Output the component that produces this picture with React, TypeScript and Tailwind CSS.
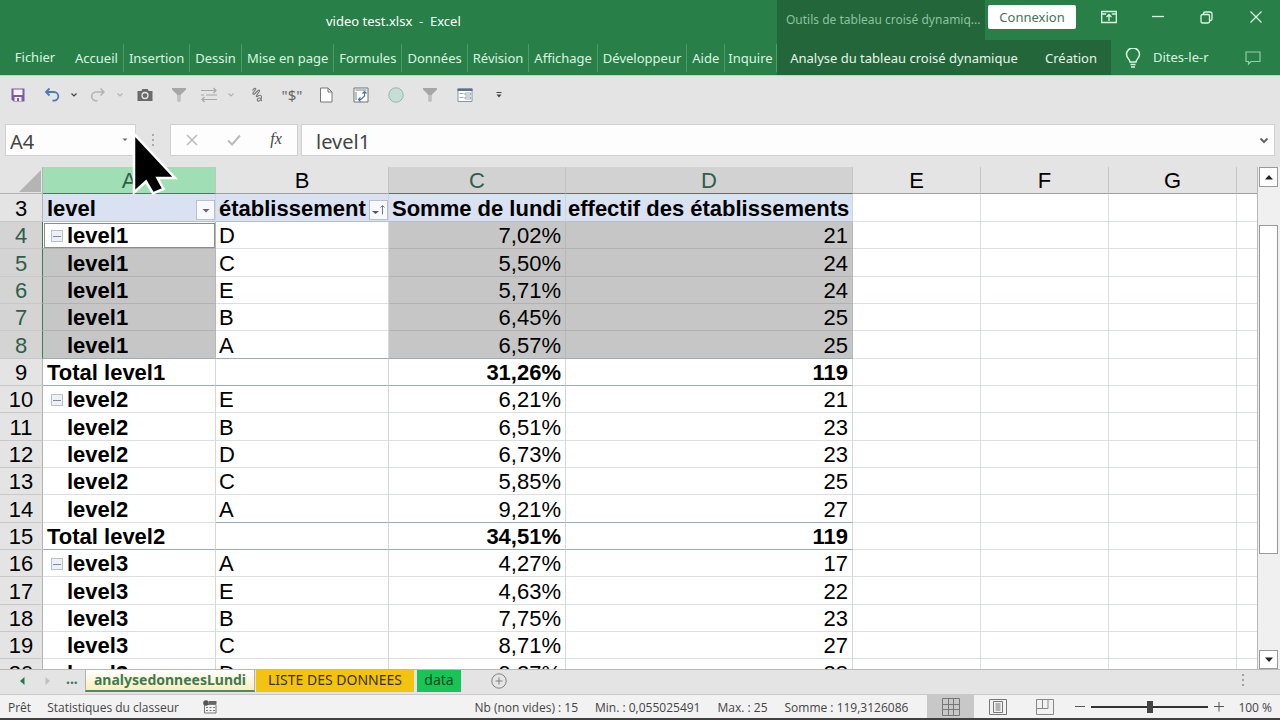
import type { ReactNode } from "react";
import clsx from "clsx";

type PivotRow = {
  n: number;
  level?: string;
  total?: string;
  first?: boolean;
  site?: string;
  sum: string;
  count: string;
};

const rows: PivotRow[] = [
  { n: 4, level: "level1", first: true, site: "D", sum: "7,02%", count: "21" },
  { n: 5, level: "level1", site: "C", sum: "5,50%", count: "24" },
  { n: 6, level: "level1", site: "E", sum: "5,71%", count: "24" },
  { n: 7, level: "level1", site: "B", sum: "6,45%", count: "25" },
  { n: 8, level: "level1", site: "A", sum: "6,57%", count: "25" },
  { n: 9, total: "Total level1", sum: "31,26%", count: "119" },
  { n: 10, level: "level2", first: true, site: "E", sum: "6,21%", count: "21" },
  { n: 11, level: "level2", site: "B", sum: "6,51%", count: "23" },
  { n: 12, level: "level2", site: "D", sum: "6,73%", count: "23" },
  { n: 13, level: "level2", site: "C", sum: "5,85%", count: "25" },
  { n: 14, level: "level2", site: "A", sum: "9,21%", count: "27" },
  { n: 15, total: "Total level2", sum: "34,51%", count: "119" },
  { n: 16, level: "level3", first: true, site: "A", sum: "4,27%", count: "17" },
  { n: 17, level: "level3", site: "E", sum: "4,63%", count: "22" },
  { n: 18, level: "level3", site: "B", sum: "7,75%", count: "23" },
  { n: 19, level: "level3", site: "C", sum: "8,71%", count: "27" },
  { n: 20, level: "level3", site: "D", sum: "9,27%", count: "28" },
];

const tabs = [
  "Accueil",
  "Insertion",
  "Dessin",
  "Mise en page",
  "Formules",
  "Données",
  "Révision",
  "Affichage",
  "Développeur",
  "Aide",
  "Inquire",
];

function FunnelIcon() {
  return (
    <svg className="h-4 w-4" viewBox="0 0 16 16" aria-hidden="true">
      <path d="M1 1h14v1.5L9.5 8v6.5h-3V8L1 2.5z" fill="#a6a6a6" />
      <path d="M8 8v6" stroke="#d8d8d8" />
    </svg>
  );
}

function Chevron({ color }: { color: string }) {
  return (
    <svg className="h-2 w-2" viewBox="0 0 8 8" fill="none" aria-hidden="true">
      <path d="M1.5 2.5L4 5l2.5-2.5" stroke={color} strokeWidth="1.2" />
    </svg>
  );
}

const tools: { label: string; className: string; icon: ReactNode }[] = [
  {
    label: "Enregistrer",
    className: "ml-1.5 w-6",
    icon: (
      <svg className="h-4 w-4" viewBox="0 0 16 16" aria-hidden="true">
        <path d="M1.5 1.5h13v13h-11l-2-2z" fill="#7b5aa6" />
        <path d="M3.5 2.5h9v5.5h-9z" fill="#f4f1f8" />
        <path d="M4.5 10h7v4h-7z" fill="#f4f1f8" />
        <path d="M7 11h2v3H7z" fill="#7b5aa6" />
      </svg>
    ),
  },
  {
    label: "Annuler",
    className: "ml-2.5 w-6",
    icon: (
      <svg className="h-4 w-4" viewBox="0 0 16 16" fill="none" aria-hidden="true">
        <path d="M5.5 1.5L2 5l3.5 3.5M2 5h8a4.3 4.3 0 0 1 0 8.7H8.5" stroke="#4a7ab5" strokeWidth="1.8" />
      </svg>
    ),
  },
  { label: "Liste Annuler", className: "ml-1 w-3", icon: <Chevron color="#444" /> },
  {
    label: "Rétablir",
    className: "ml-1.5 w-6",
    icon: (
      <svg className="h-4 w-4" viewBox="0 0 16 16" fill="none" aria-hidden="true">
        <path d="M10.5 1.5L14 5l-3.5 3.5M14 5H6a4.3 4.3 0 0 0 0 8.7h1.5" stroke="#b4b4b4" strokeWidth="1.6" />
      </svg>
    ),
  },
  { label: "Liste Rétablir", className: "ml-1 w-3", icon: <Chevron color="#b4b4b4" /> },
  {
    label: "Appareil photo",
    className: "ml-[7px] w-6",
    icon: (
      <svg className="h-4 w-4" viewBox="0 0 16 16" aria-hidden="true">
        <path d="M.5 4h3.8l1-2h5.4l1 2h3.8v10H.5z" fill="#6a6a6a" />
        <circle cx="8" cy="8.5" r="3" fill="none" stroke="#e4e4e4" strokeWidth="1.3" />
      </svg>
    ),
  },
  { label: "Filtrer", className: "ml-2.5 w-6", icon: <FunnelIcon /> },
  {
    label: "Permuter",
    className: "ml-1.5 w-6",
    icon: (
      <svg className="h-4 w-[18px]" viewBox="0 0 18 16" fill="none" stroke="#a8a8a8" strokeWidth="1.2" aria-hidden="true">
        <path d="M1 3.5h15M13.5 1L16 3.5 13.5 6M1 8h3M6 8h11M2 12.5h15M4.5 10L2 12.5 4.5 15" />
      </svg>
    ),
  },
  { label: "Liste Permuter", className: "ml-1 w-3", icon: <Chevron color="#b4b4b4" /> },
  {
    label: "Forme libre",
    className: "ml-2 w-6",
    icon: (
      <svg className="h-4 w-4" viewBox="0 0 16 16" fill="none" stroke="#777" strokeWidth="1.1" aria-hidden="true">
        <path d="M3.500 3.500C5 1 7.500.5 6.500 2.500L4 6c-.5 1.500 1 1.500 2 .5l3-3c1.500-1 2 0 1 1.500L7.500 8.500C7 10 8 10 9 9s3.500-1.500 3.500 1-2 4.500-3.500 4-.5-3 1.500-3 1.500 2.500 2.500 3" />
      </svg>
    ),
  },
  {
    label: "Format monétaire",
    className: "ml-[11px] w-6",
    icon: <span className="text-[15px] leading-4 text-[#666]">"$"</span>,
  },
  {
    label: "Nouveau",
    className: "ml-2.5 w-6",
    icon: (
      <svg className="h-4 w-4" viewBox="0 0 16 16" aria-hidden="true">
        <path d="M2.5 1H10l4 4v10H2.5z" fill="#fff" stroke="#777" />
        <path d="M10 1v4h4" fill="none" stroke="#777" />
      </svg>
    ),
  },
  {
    label: "Actualiser",
    className: "ml-[11px] w-6",
    icon: (
      <svg className="h-4 w-4" viewBox="0 0 16 16" fill="none" aria-hidden="true">
        <path d="M1 1h14v14H1z" fill="#fff" stroke="#707070" />
        <path d="M2.500 3h11M3 5v8" stroke="#9ab0c4" strokeWidth="1.5" />
        <path d="M11.5 5v4L8 12.5H5.5M9.5 6.5l2-2 2 2M7.5 10.5l-2 2 2 2" stroke="#3f78ae" strokeWidth="1.2" />
      </svg>
    ),
  },
  {
    label: "Ellipse",
    className: "ml-[11px] w-6",
    icon: (
      <svg className="h-4 w-4" viewBox="0 0 16 16" aria-hidden="true">
        <circle cx="8" cy="8" r="7.2" fill="#c5dfd5" stroke="#92b8a8" />
      </svg>
    ),
  },
  { label: "Effacer le filtre", className: "ml-2.5 w-6", icon: <FunnelIcon /> },
  {
    label: "Formulaire",
    className: "ml-[11px] w-6",
    icon: (
      <svg className="h-4 w-4" viewBox="0 0 16 16" fill="none" aria-hidden="true">
        <path d="M1 2h14v12.5H1z" fill="#fff" stroke="#8496a8" />
        <path d="M.5 1.5h15V4H.5z" fill="#5a7189" />
        <path d="M2.5 6.5h4M2.5 10.500h4M8 6h5.500v2H8zM8 10h5.500v2H8z" stroke="#9aa8b6" />
      </svg>
    ),
  },
  {
    label: "Personnaliser",
    className: "ml-4 w-3",
    icon: (
      <svg className="h-2 w-2" viewBox="0 0 8 8" aria-hidden="true">
        <path d="M1.5 1h5v1h-5zM1.5 3.500h5L4 6.500z" fill="#444" />
      </svg>
    ),
  },
];

function TitleBar() {
  return (
    <div className="flex h-10 text-[#d9f7e1]">
      <div className="flex w-[777px] items-center pt-1 text-[13px]">
        <h1 className="ml-[326px] whitespace-pre text-white">video test.xlsx  -  Excel</h1>
      </div>
      <div className="flex w-52 items-center bg-[#226639] pl-[9px] text-xs whitespace-nowrap text-[#8fc29f]">
        Outils de tableau croisé dynamiq...
      </div>
      <div className="flex flex-1 items-start pl-[3px] pt-[5px]">
        <button type="button" className="h-6 w-[88px] rounded-xs bg-white pt-0.5 text-[13px] text-[#44735a]">
          Connexion
        </button>
        <div className="ml-auto flex h-6 items-center">
          <button type="button" aria-label="Options du ruban" className="grid w-[50px] place-items-center">
            <svg className="h-4 w-4" viewBox="0 0 16 16" fill="none" stroke="currentColor" strokeWidth="1.3" aria-hidden="true">
              <path d="M.7 2.5h14.600v11H.7zM.7 5h4.500M10.800 5h4.500M8 12V5.500M5.500 8L8 5.500 10.500 8" />
            </svg>
          </button>
          <button type="button" aria-label="Réduire" className="grid w-12 place-items-center">
            <svg className="h-3 w-3" viewBox="0 0 12 12" stroke="currentColor" strokeWidth="1.3" aria-hidden="true">
              <path d="M0 5.500h12" />
            </svg>
          </button>
          <button type="button" aria-label="Restaurer" className="grid w-[49px] place-items-center">
            <svg className="h-[13px] w-[13px]" viewBox="0 0 13 13" fill="none" stroke="currentColor" strokeWidth="1.3" aria-hidden="true">
              <rect x="1" y="3.5" width="8.5" height="8.5" rx="1.5" />
              <path d="M3.500 3.500V2.500a1.500 1.500 0 0 1 1.500-1.500h5a2 2 0 0 1 2 2v5a1.500 1.500 0 0 1-1.500 1.500h-1" />
            </svg>
          </button>
          <button type="button" aria-label="Fermer" className="grid w-[49px] place-items-center">
            <svg className="h-3 w-3" viewBox="0 0 12 12" stroke="currentColor" strokeWidth="1.3" aria-hidden="true">
              <path d="M.5.5l11 11M11.500.5l-11 11" />
            </svg>
          </button>
        </div>
      </div>
    </div>
  );
}

function RibbonTabs() {
  return (
    <nav className="flex h-9 items-stretch border-b border-[#a9e0b8] text-[13px] text-[#d9f7e1]">
      <button type="button" className="w-[70px] pt-px">
        Fichier
      </button>
      <div className="flex w-[707px] items-center">
        {tabs.map((tab) => (
          <button
            key={tab}
            type="button"
            className="h-7 whitespace-nowrap border-r border-[#4c9c67] px-[5px] pt-0.5 last:px-[3px]"
          >
            {tab}
          </button>
        ))}
      </div>
      <div className="flex items-center bg-[#226639] text-[#e6f6ea]">
        <button type="button" className="w-[254px] pt-0.5 whitespace-nowrap">
          Analyse du tableau croisé dynamique
        </button>
        <button type="button" className="w-20 pt-0.5">
          Création
        </button>
      </div>
      <button type="button" className="ml-3.5 flex items-center gap-3 pt-px">
        <svg className="h-5 w-4" viewBox="0 0 16 20" fill="none" stroke="currentColor" strokeWidth="1.5" aria-hidden="true">
          <path d="M5 14c0-2.500-3.500-4-3.500-7.500a6.200 6.200 0 0 1 13 0C14.500 10 11 11.500 11 14zM5.500 16.500h5M6 19h4" />
        </svg>
        Dites-le-r
      </button>
      <button type="button" aria-label="Commentaires" className="ml-auto mr-[19px]">
        <svg className="h-4 w-4" viewBox="0 0 16 16" fill="none" stroke="#8fd0a3" strokeWidth="1.2" aria-hidden="true">
          <path d="M1 2h14v9.500H6L3.500 14v-2.500H1z" />
        </svg>
      </button>
    </nav>
  );
}

function FormulaBar() {
  return (
    <div className="flex h-8 items-stretch px-[5px] text-xl text-[#444]">
      <div className="flex w-[131px] items-center border border-[#d0d0d0] bg-[#fdfdfd]">
        <input aria-label="Zone Nom" defaultValue="A4" className="w-full min-w-0 flex-1 pl-1 pt-1 outline-none" />
        <button type="button" aria-label="Liste des noms" className="mr-1.5">
          <svg className="h-2 w-2" viewBox="0 0 8 8" aria-hidden="true">
            <path d="M1.5 2.5h5L4 5z" fill="#666" />
          </svg>
        </button>
      </div>
      <div className="grid w-[34px] place-items-center">
        <svg className="h-4 w-1" viewBox="0 0 4 16" fill="#aaa" aria-hidden="true">
          <path d="M1 2h2v2H1zM1 7h2v2H1zM1 12h2v2H1z" />
        </svg>
      </div>
      <div className="flex w-32 items-center border border-[#d0d0d0] bg-[#fdfdfd]">
        <button type="button" aria-label="Annuler la saisie" className="grid flex-1 place-items-center">
          <svg className="h-3 w-3" viewBox="0 0 12 12" stroke="#bbb" strokeWidth="1.5" aria-hidden="true">
            <path d="M1 1l10 10M11 1L1 11" />
          </svg>
        </button>
        <button type="button" aria-label="Entrer" className="grid flex-1 place-items-center">
          <svg className="h-3 w-3.5" viewBox="0 0 14 12" fill="none" stroke="#bbb" strokeWidth="2" aria-hidden="true">
            <path d="M1 6.500L5 10.500 13 1.500" />
          </svg>
        </button>
        <button
          type="button"
          aria-label="Insérer une fonction"
          className="flex-1 pb-0.5 font-['Liberation_Serif',serif] text-base leading-5 italic"
        >
          fx
        </button>
      </div>
      <div className="ml-[3px] flex flex-1 items-center border border-[#d0d0d0] bg-[#fdfdfd]">
        <input aria-label="Barre de formule" defaultValue="level1" className="min-w-0 flex-1 pl-3.5 pt-1 outline-none" />
        <button type="button" aria-label="Développer la barre de formule" className="mr-1">
          <svg className="h-3 w-3" viewBox="0 0 12 12" fill="none" stroke="#666" strokeWidth="2" aria-hidden="true">
            <path d="M2.500 4.500L6 8 9.500 4.500" />
          </svg>
        </button>
      </div>
    </div>
  );
}

function ColumnHead({ name, active }: { name: string; active?: boolean }) {
  return (
    <th
      scope="col"
      className={clsx(
        "border-r border-b border-r-[#c4c4c4] font-normal",
        name === "A" && "bg-[#a0dfb6]",
        active && name !== "A" && "bg-[#d2d2d2]",
        active ? "border-b-[#4f7663] text-[#2f5f49]" : "border-b-[#a0a0a0]",
      )}
    >
      {name}
    </th>
  );
}

function FieldButton({ sorted }: { sorted?: boolean }) {
  return (
    <button
      type="button"
      aria-label="Filtre du champ"
      className="mt-0.5 grid h-5 w-[19px] shrink-0 place-items-center border border-[#b8c0cc] bg-[#f8f9fc]"
    >
      <svg className="h-4 w-4" viewBox="0 0 16 16" aria-hidden="true">
        {sorted ? (
          <>
            <path d="M1 9h7l-3.500 3z" fill="#555" />
            <path d="M11.500 12.500v-9M9.500 5.500l2-2 2 2" fill="none" stroke="#777" />
          </>
        ) : (
          <path d="M4.500 7h7L8 10.500z" fill="#666" />
        )}
      </svg>
    </button>
  );
}

function BlankCells() {
  return (
    <>
      {["E", "F", "G", "H"].map((col) => (
        <td key={col} className="border-r border-b border-[#dcdfe0] last:border-r-0" />
      ))}
    </>
  );
}

function Row({ row }: { row: PivotRow }) {
  const selected = row.n <= 8;
  const ruled = row.n === 8 || row.n === 9 || row.n === 14 || row.n === 15;
  const line = ruled ? "border-b-[#9aabba]" : selected ? "border-b-[#b2b2b2]" : "border-b-[#dcdfe0]";
  const value = clsx(
    "border-r border-b px-1 text-right",
    line,
    selected ? "border-r-[#b8b8b8] bg-[#c6c6c6]" : "border-r-[#d4d8da]",
    row.total && "font-bold",
  );

  return (
    <tr className="h-[27px] [&:nth-child(3n)]:h-7">
      <th
        scope="row"
        className={clsx(
          "border-r border-b border-b-[#c8c8c8] font-normal",
          selected ? "border-r-[#3f7a5b] bg-[#d4d4d4] text-[#2f5f49]" : "border-r-[#b4b4b4] bg-[#e4e4e4]",
        )}
      >
        {row.n}
      </th>
      <td
        className={clsx(
          "border-r border-b font-bold",
          row.n === 14 ? "border-b-[#dcdfe0]" : line,
          selected ? "border-r-[#b8b8b8]" : "border-r-[#d4d8da]",
          selected && !row.first && "bg-[#c6c6c6]",
          selected && row.first && "outline outline-1 -outline-offset-2 outline-[#8c8c8c]",
        )}
      >
        {row.total ? (
          <span className="pl-1">{row.total}</span>
        ) : (
          <div className="flex items-center gap-1 pl-2">
            {row.first ? (
              <button
                type="button"
                aria-label={`Réduire ${row.level}`}
                className="grid h-3 w-3 place-items-center border border-[#b9c0c8] bg-[#edf0f4]"
              >
                <span className="h-px w-2 bg-[#7f8a96]" />
              </button>
            ) : (
              <span className="w-3" />
            )}
            {row.level}
          </div>
        )}
      </td>
      <td
        className={clsx(
          "border-r border-b border-r-[#d4d8da] px-[3px]",
          ruled ? "border-b-[#9aabba]" : "border-b-[#dcdfe0]",
        )}
      >
        {row.site}
      </td>
      <td className={value}>{row.sum}</td>
      <td className={value}>{row.count}</td>
      <BlankCells />
    </tr>
  );
}

function Sheet() {
  const field = "border-r border-b border-r-[#cdd5e4] border-b-[#b4bfd0] bg-[#dae1f1]";

  return (
    <div className="min-w-0 flex-1 overflow-hidden border-r border-[#b8b8b8] bg-white">
      <table className="w-full table-fixed border-separate border-spacing-0 font-['Liberation_Sans',Arial,sans-serif] text-[22px] leading-6 text-black [&_td]:pt-0.5 [&_td]:pb-0 [&_th]:px-0 [&_th]:pt-0.5 [&_th]:pb-0">
        <colgroup>
          <col className="w-[43px]" />
          <col className="w-[173px]" />
          <col className="w-[173px]" />
          <col className="w-[177px]" />
          <col className="w-[287px]" />
          <col className="w-32" />
          <col className="w-32" />
          <col className="w-32" />
          <col />
        </colgroup>
        <thead className="bg-[#e4e4e4]">
          <tr className="h-[27px]">
            <td className="border-r border-b border-[#b4b4b4]">
              <svg className="ml-auto mr-px h-[22px] w-[22px]" viewBox="0 0 22 22" aria-hidden="true">
                <path d="M22 0v22H0z" fill="#b4b4b4" />
              </svg>
            </td>
            <ColumnHead name="A" active />
            <ColumnHead name="B" />
            <ColumnHead name="C" active />
            <ColumnHead name="D" active />
            <ColumnHead name="E" />
            <ColumnHead name="F" />
            <ColumnHead name="G" />
            <td className="border-b border-[#a0a0a0]" />
          </tr>
        </thead>
        <tbody>
          <tr className="h-7 font-bold">
            <th scope="row" className="border-r border-b border-r-[#b4b4b4] border-b-[#c8c8c8] bg-[#e4e4e4] font-normal">
              3
            </th>
            <td className={field}>
              <div className="flex h-[25px] items-center justify-between pl-1">
                level
                <FieldButton />
              </div>
            </td>
            <td className={field}>
              <div className="flex h-[25px] items-center justify-between pl-[3px]">
                établissement
                <FieldButton sorted />
              </div>
            </td>
            <td className={clsx(field, "whitespace-nowrap")}>
              <span className="pl-[3px]">Somme de lundi</span>
            </td>
            <td className={clsx(field, "whitespace-nowrap")}>
              <span className="pl-0.5">effectif des établissements</span>
            </td>
            <BlankCells />
          </tr>
          {rows.map((row) => (
            <Row key={row.n} row={row} />
          ))}
        </tbody>
      </table>
    </div>
  );
}

function ScrollBar() {
  return (
    <div className="flex w-[22px] flex-col bg-[#f0f0f0] px-px pr-0.5">
      <button type="button" aria-label="Défiler vers le haut" className="grid h-5 shrink-0 place-items-center border border-[#999] bg-white">
        <svg className="h-2.5 w-2.5" viewBox="0 0 10 10" aria-hidden="true">
          <path d="M1 7.500h8L5 3z" fill="#222" />
        </svg>
      </button>
      <div className="flex min-h-0 flex-1 flex-col pt-[38px] pb-24">
        <div className="flex-1 border border-[#999] bg-white" />
      </div>
      <button type="button" aria-label="Défiler vers le bas" className="grid h-[19px] shrink-0 place-items-center border border-[#999] bg-white">
        <svg className="h-2.5 w-2.5" viewBox="0 0 10 10" aria-hidden="true">
          <path d="M1 2.500h8L5 7z" fill="#222" />
        </svg>
      </button>
    </div>
  );
}

function SheetTabs() {
  return (
    <div className="flex h-[25px] items-start border-t border-[#b8b8b8] text-sm leading-[18px]">
      <button type="button" aria-label="Feuille précédente" className="ml-[18px] mt-[7px]">
        <svg className="h-2 w-2" viewBox="0 0 8 8" aria-hidden="true">
          <path d="M6.500 0v8L2 4z" fill="#1f7a4a" />
        </svg>
      </button>
      <button type="button" aria-label="Feuille suivante" className="ml-[18px] mt-[7px]">
        <svg className="h-2 w-2" viewBox="0 0 8 8" aria-hidden="true">
          <path d="M1.500 0v8L6 4z" fill="#c0c0c0" />
        </svg>
      </button>
      <button type="button" className="ml-2.5 w-[23px] text-left font-bold text-[#44735a]">
        <span className="pl-1">...</span>
      </button>
      <button
        type="button"
        className="h-[22px] w-[170px] border-x border-b-2 border-x-[#b0b0b0] border-b-[#4f8a63] bg-linear-to-b from-white to-[#fbeebc] font-bold text-[#3f7a50]"
      >
        analysedonneesLundi
      </button>
      <button type="button" className="ml-px h-[22px] w-[158px] bg-[#f2c40f] pb-0.5 text-[#3d2f05]">
        LISTE DES DONNEES
      </button>
      <button type="button" className="ml-[3px] h-[22px] w-11 bg-[#18c455] pb-0.5 text-[#064d20]">
        data
      </button>
      <button type="button" aria-label="Nouvelle feuille" className="ml-[30px] mt-[3px]">
        <svg className="h-4 w-4" viewBox="0 0 16 16" fill="none" stroke="#808080" aria-hidden="true">
          <circle cx="8" cy="8" r="7.2" />
          <path d="M8 4.500v7M4.500 8h7" />
        </svg>
      </button>
      <svg className="ml-auto mr-[35px] mt-[3px] h-4 w-1" viewBox="0 0 4 16" fill="#a0a0a0" aria-hidden="true">
        <path d="M1 1h2v2H1zM1 6h2v2H1zM1 11h2v2H1z" />
      </svg>
    </div>
  );
}

function StatusBar() {
  return (
    <footer className="flex h-[26px] items-center border-t border-b-2 border-t-[#c8c8c8] border-b-[#404040] bg-[#f2f2f2] font-['Open_Sans','Noto_Sans',sans-serif] text-xs text-[#444]">
      <span className="ml-2 pt-0.5">Prêt</span>
      <span className="ml-4 pt-0.5">Statistiques du classeur</span>
      <button type="button" aria-label="Enregistrer une macro" className="ml-6">
        <svg className="h-3.5 w-3.5" viewBox="0 0 14 14" fill="none" aria-hidden="true">
          <path d="M1.500 4.500h11.500v8.500H1.500zM3 7.500h2M6.500 7.500h2M10 7.500h2M3 10.500h2M6.500 10.500h2M10 10.500h2" stroke="#777" />
          <path d="M6 1h7.500v3H6z" fill="#666" />
          <circle cx="3" cy="3" r="2.8" fill="#555" />
        </svg>
      </button>
      <div className="ml-auto flex gap-[17px] pt-0.5">
        <span>Nb (non vides) : 15</span>
        <span>Min. : 0,055025491</span>
        <span>Max. : 25</span>
        <span>Somme : 119,3126086</span>
      </div>
      <div className="ml-[19px] flex self-stretch">
        <button type="button" aria-label="Normal" className="grid w-[47px] place-items-center bg-[#c8c8c8]">
          <svg className="h-[18px] w-[18px]" viewBox="0 0 18 18" fill="none" stroke="#777" aria-hidden="true">
            <path d="M.5.5h17v17H.5zM.5 6.500h17M.5 11.500h17M6.500.5v17M11.500.5v17" />
          </svg>
        </button>
        <button type="button" aria-label="Mise en page" className="grid w-[47px] place-items-center">
          <svg className="h-[18px] w-[18px]" viewBox="0 0 18 18" fill="none" stroke="#777" aria-hidden="true">
            <path d="M.5 1.500h17v15H.5zM4.500 3.500h9v11h-9zM6.500 6h5M6.500 8h5M6.500 10h5M6.500 12h5" />
          </svg>
        </button>
        <button type="button" aria-label="Aperçu des sauts de page" className="grid w-[47px] place-items-center">
          <svg className="h-[18px] w-[18px]" viewBox="0 0 18 18" fill="none" stroke="#888" aria-hidden="true">
            <path d="M.5 1.500h17v15H.5zM.5 10.500h11.500v-9M6.500 1.500v9" />
          </svg>
        </button>
      </div>
      <button type="button" aria-label="Zoom arrière" className="ml-[7px]">
        <svg className="h-2.5 w-2.5" viewBox="0 0 10 10" stroke="#555" aria-hidden="true">
          <path d="M0 4.500h10" />
        </svg>
      </button>
      <input
        type="range"
        aria-label="Zoom"
        className="mx-1.5 h-0.5 w-[117px] appearance-none bg-[#333] [&::-webkit-slider-thumb]:h-3 [&::-webkit-slider-thumb]:w-1.5 [&::-webkit-slider-thumb]:appearance-none [&::-webkit-slider-thumb]:bg-[#444]"
      />
      <button type="button" aria-label="Zoom avant">
        <svg className="h-2.5 w-2.5" viewBox="0 0 10 10" stroke="#555" aria-hidden="true">
          <path d="M0 4.500h10M5 0v9.500" />
        </svg>
      </button>
      <span className="mr-2 ml-3.5 pt-0.5">100 %</span>
    </footer>
  );
}

export default function App() {
  return (
    <div className="relative flex h-screen flex-col overflow-hidden bg-[#e4e4e4] font-['Noto_Sans','Open_Sans',sans-serif]">
      <header className="bg-[#287f47]">
        <TitleBar />
        <RibbonTabs />
      </header>
      <div className="flex h-[38px] items-center" role="toolbar" aria-label="Accès rapide">
        {tools.map((tool) => (
          <button
            key={tool.label}
            type="button"
            aria-label={tool.label}
            className={clsx("grid h-6 shrink-0 place-items-center", tool.className)}
          >
            {tool.icon}
          </button>
        ))}
      </div>
      <div className="pt-2.5 pb-[11px]">
        <FormulaBar />
      </div>
      <main className="flex min-h-0 flex-1">
        <Sheet />
        <ScrollBar />
      </main>
      <SheetTabs />
      <StatusBar />

      {/* mouse pointer */}
      <svg className="pointer-events-none absolute top-[131px] left-[132px] h-[66px] w-[48px]" viewBox="0 0 48 66" aria-hidden="true">
        <path
          d="M2 3v58.500L14 50.500l7 12 10.500-4.500L25.500 47H43z"
          fill="#000"
          stroke="#fff"
          strokeWidth="2.500"
        />
      </svg>
    </div>
  );
}
